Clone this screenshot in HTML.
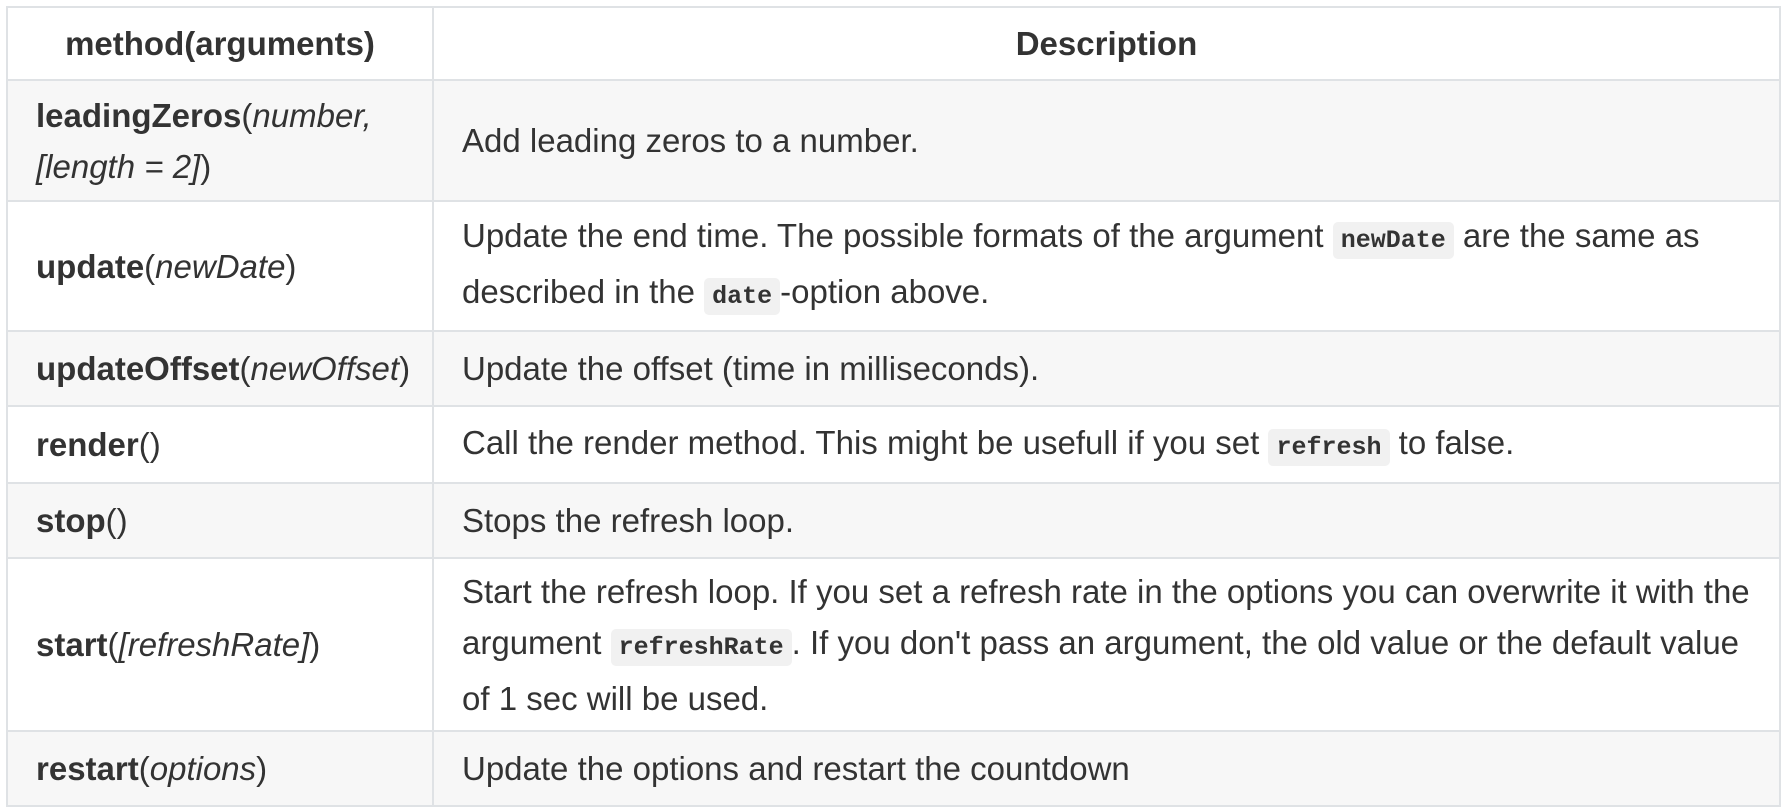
<!DOCTYPE html>
<html><head><meta charset="utf-8"><style>
html,body{margin:0;padding:0;background:#fff;width:1786px;height:812px;overflow:hidden}
table{position:absolute;left:6px;top:6px;border-collapse:collapse;width:1775px;font-family:"Liberation Sans",sans-serif;font-size:33px;color:#333;table-layout:fixed}
td,th{border:2px solid #dfe2e5;padding:0 28px;white-space:nowrap;line-height:51px}
th{font-weight:bold;text-align:center}
col.a{width:426px}
tr:nth-child(even){background:#f7f7f7}
code{font-family:"Liberation Mono",monospace;font-weight:bold;font-size:25px;background:#f1f1f1;border-radius:5px;padding:4px 8px}
b{font-weight:bold}
</style></head><body>
<table>
<colgroup><col class="a"><col></colgroup>
<tr style="height:73px"><th>method(arguments)</th><th>Description</th></tr>
<tr style="height:121px"><td><b>leadingZeros</b>(<i>number,</i><br><i>[length = 2]</i>)</td><td>Add leading zeros to a number.</td></tr>
<tr style="height:130px"><td><b>update</b>(<i>newDate</i>)</td><td>Update the end time. The possible formats of the argument <code>newDate</code> are the same as<br>described in the <code>date</code>-option above.</td></tr>
<tr style="height:75px"><td><b>updateOffset</b>(<i>newOffset</i>)</td><td>Update the offset (time in milliseconds).</td></tr>
<tr style="height:77px"><td><b>render</b>()</td><td>Call the render method. This might be usefull if you set <code>refresh</code> to false.</td></tr>
<tr style="height:75px"><td><b>stop</b>()</td><td>Stops the refresh loop.</td></tr>
<tr style="height:173px"><td><b>start</b>(<i>[refreshRate]</i>)</td><td>Start the refresh loop. If you set a refresh rate in the options you can overwrite it with the<br>argument <code>refreshRate</code>. If you don't pass an argument, the old value or the default value<br>of 1 sec will be used.</td></tr>
<tr style="height:75px"><td><b>restart</b>(<i>options</i>)</td><td>Update the options and restart the countdown</td></tr>
</table>
</body></html>
